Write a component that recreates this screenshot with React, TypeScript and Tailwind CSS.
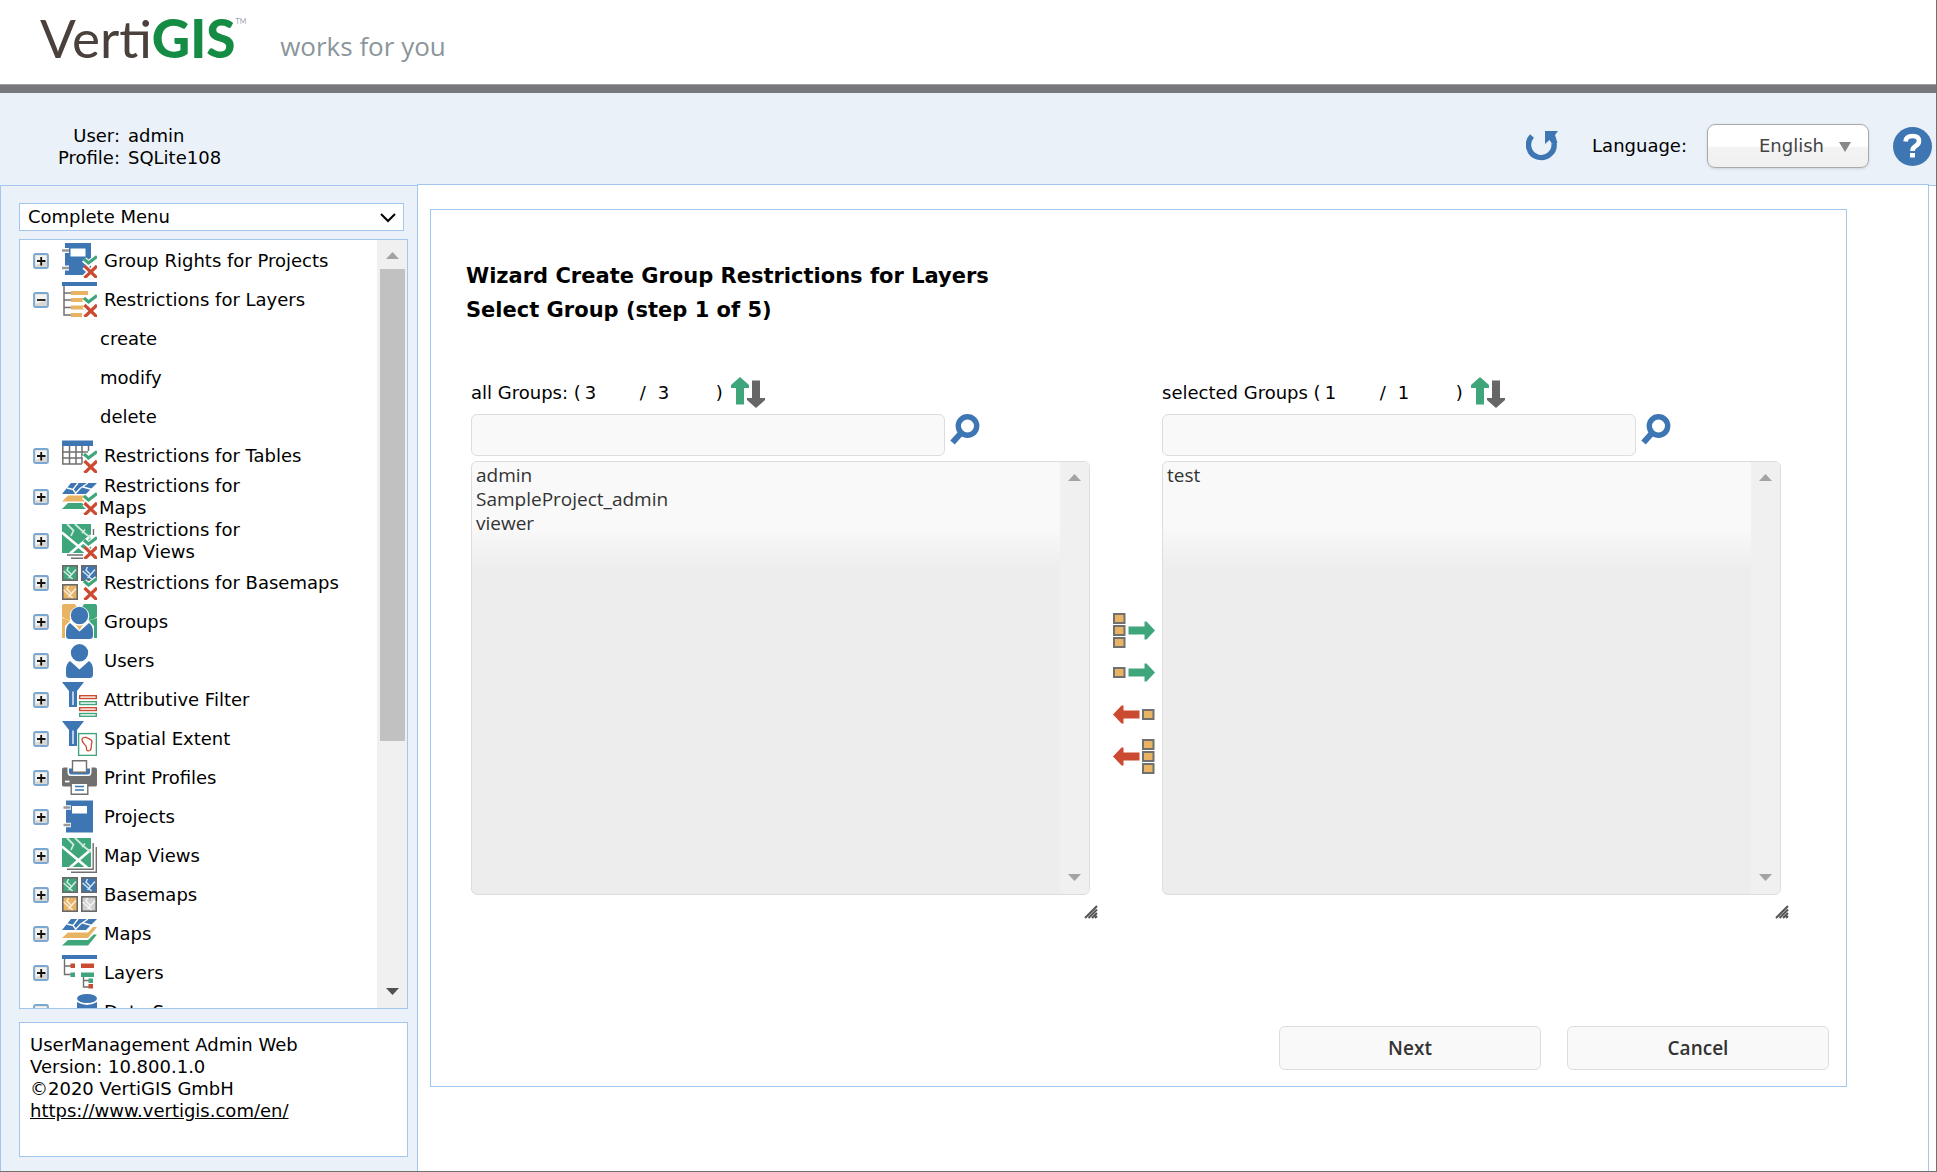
import type { ReactNode } from "react";

const BLUE = "#3d76b3";
const GREEN = "#3fa67c";
const RED = "#cb4b32";
const ORANGE = "#e8b363";
const GRAY = "#707070";

/* ---------- tree icons, all drawn on a 35 x 35 grid ---------- */

const Icon = ({ children }: { children: ReactNode }) => (
  <svg width="35" height="35" viewBox="0 0 35 35" className="shrink-0" aria-hidden="true">
    {children}
  </svg>
);

// green tick and red cross in the lower right corner
const Marks = () => (
  <g fill="none">
    <path d="M22 16.5l4.5 4L35 13.5M22.5 23.5l12 11M34.5 23.5l-12 11" stroke="#fff" strokeWidth="6" />
    <path d="M22 16l4.5 4 8.5-6.5" stroke={GREEN} strokeWidth="3.2" />
    <path d="M22.5 23l12.5 12M35 23L22.5 35" stroke={RED} strokeWidth="3.2" />
  </g>
);

const GroupRightsIcon = () => (
  <Icon>
    <path fill={BLUE} d="M3 0h26v32H3z" />
    <path fill="#fff" d="M8.5 5.5h15v8h-15z" />
    <path d="M0 7.5h7M0 25h7" stroke="#fff" strokeWidth="5" />
    <path d="M0 7.5h7M0 25h7" stroke="#9a9a9a" strokeWidth="2.5" />
    <Marks />
  </Icon>
);

const RestrictLayersIcon = () => (
  <Icon>
    <path d="M2 4v29h7M2 11h7M2 18h7M2 25.5h7" fill="none" stroke={GRAY} strokeWidth="1.5" />
    <path fill={BLUE} d="M0 0h35v4H0z" />
    <path fill={ORANGE} d="M9 9h17v4H9zM9 16h15v4H9zM9 23.5h13v4H9zM9 31h11v4H9z" />
    <Marks />
  </Icon>
);

const RestrictTablesIcon = () => (
  <Icon>
    <path
      d="M.8 8v18H20M7.5 8v18M14 8v18M20 8v18M26.5 8v5M.8 14H26M.8 20h19"
      fill="none"
      stroke={GRAY}
      strokeWidth="1.5"
    />
    <path fill={BLUE} d="M0 2.5h31V8H0z" />
    <Marks />
  </Icon>
);

const BlueSheet = () => (
  <>
    <path fill={BLUE} d="M9 3h26L24 14H0z" />
    <path
      d="M5 8l6 1.5L16 3M13 14l5-5.500 8-5.500M11 9.500l3 4M21 7l9 2.500"
      fill="none"
      stroke="#fff"
      strokeWidth="1.3"
    />
  </>
);

const RestrictMapsIcon = () => (
  <Icon>
    <BlueSheet />
    <path fill={ORANGE} d="M6 15.5h19l-1 6H0z" />
    <path fill={GREEN} d="M6 23h14l6 6H0z" />
    <Marks />
  </Icon>
);

const MapsIcon = () => (
  <Icon>
    <BlueSheet />
    <path fill={ORANGE} d="M6 16.5h20L31 11h4L26 22H0z" />
    <path fill={GREEN} d="M6 24h20l5.5-5.5H35l-9 11H0z" />
  </Icon>
);

const MapSheet = () => (
  <>
    <path fill={GREEN} d="M0 0h29v29H0z" />
    <path d="M0 8.5l25 21M29 11.5l-21 18" fill="none" stroke="#fff" strokeWidth="2.6" />
    <path d="M5 0l6.5 6.5L9 12M13 0l10 9.5 6 4.5M20 9l3-3.5" fill="none" stroke="#cfe9de" strokeWidth="1.8" />
  </>
);

const RestrictMapViewsIcon = () => (
  <Icon>
    <MapSheet />
    <path d="M5 31h16M9 34.2h12M31.5 5v6" fill="none" stroke={GRAY} strokeWidth="1.4" />
    <Marks />
  </Icon>
);

const MapViewsIcon = () => (
  <Icon>
    <MapSheet />
    <path d="M31.2 5v26.2H5M34.3 9v25.3H9" fill="none" stroke={GRAY} strokeWidth="1.4" />
  </Icon>
);

const Tile = ({ x, y, fill }: { x: number; y: number; fill: string }) => (
  <g transform={`translate(${x} ${y})`}>
    <rect x=".8" y=".8" width="14.4" height="14.4" fill={fill} stroke="#696969" strokeWidth="1.6" />
    <path
      d="M1.6 6l9 8M14 4.5L6.500 13M6.5 2L5 5l4 4"
      fill="none"
      stroke="#fff"
      strokeOpacity=".8"
      strokeWidth="1.4"
    />
  </g>
);

const RestrictBasemapsIcon = () => (
  <Icon>
    <Tile x={0} y={0} fill={GREEN} />
    <Tile x={19} y={0} fill={BLUE} />
    <Tile x={0} y={19} fill={ORANGE} />
    <Marks />
  </Icon>
);

const BasemapsIcon = () => (
  <Icon>
    <Tile x={0} y={0} fill={GREEN} />
    <Tile x={19} y={0} fill={BLUE} />
    <Tile x={0} y={19} fill={ORANGE} />
    <Tile x={19} y={19} fill="#cfcfcf" />
  </Icon>
);

const GroupsIcon = () => (
  <Icon>
    <circle cx="7" cy="7" r="9" fill={ORANGE} />
    <circle cx="28" cy="7" r="9" fill={GREEN} />
    <path fill={ORANGE} d="M0 14l9 3v17H0z" />
    <path fill={GREEN} d="M35 14l-9 3v17h9z" />
    <path fill="#fff" d="M3 22l5-5h19l5 5v13H3z" />
    <path fill={ORANGE} d="M14 21h7l-3.5 5z" />
    <circle cx="17.5" cy="12" r="9.8" fill="#fff" />
    <circle cx="17.5" cy="11.5" r="8.7" fill={BLUE} />
    <path fill={BLUE} d="M8 19l9.5 8.5L27 19c3 2 4 5 4 9v3c0 3-1 4-4 4H8c-3 0-4-1-4-4v-3c0-4 1-7 4-9z" />
  </Icon>
);

const UsersIcon = () => (
  <Icon>
    <circle cx="17.5" cy="9.8" r="8.7" fill={BLUE} />
    <path fill={BLUE} d="M8 18l9.5 8.5L27 18c3 2 4 5 4 9v4c0 3-1 4-4 4H8c-3 0-4-1-4-4v-4c0-4 1-7 4-9z" />
  </Icon>
);

const Funnel = () => (
  <>
    <path fill={BLUE} d="M0 0h22l-7 9v16H7V9z" />
    <path d="M11 9.5V23" stroke="#dce7f2" strokeWidth="1.6" />
  </>
);

const AttributiveFilterIcon = () => (
  <Icon>
    <Funnel />
    <g fill="#fff" strokeWidth="1.4">
      <rect x="17.7" y="13.7" width="16.6" height="2.8" stroke={RED} />
      <rect x="17.7" y="19.7" width="16.6" height="2.8" stroke={GREEN} />
      <rect x="17.7" y="25.7" width="16.6" height="2.8" stroke={RED} />
      <rect x="17.7" y="31.5" width="16.6" height="2.8" stroke={GREEN} />
    </g>
  </Icon>
);

const SpatialExtentIcon = () => (
  <Icon>
    <Funnel />
    <rect x="16.6" y="12.6" width="17.8" height="21.8" fill="#fff" stroke={GREEN} strokeWidth="1.4" />
    <path
      d="M20 18c1-2 3-1.5 4.5-1.5 2 1.5 5.5 1 5.5 4.5-1.5 3 .5 6-2 8.5-3 1-4-.5-3.5-3-.5-3-5-4-4.5-8.5z"
      fill="none"
      stroke={RED}
      strokeWidth="1.3"
    />
  </Icon>
);

const PrintIcon = () => (
  <Icon>
    <path fill={GRAY} d="M2 7.5h31q2 0 2 2V25q0 1.500-2 1.500H2Q0 26.500 0 25V9.500q0-2 2-2z" />
    <path fill="#fff" d="M5.500 7h24v5q0 4-3 4h-18q-3 0-3-4z" />
    <path fill={BLUE} d="M7 8.500h21V12q0 2.500-2 2.500H9q-2 0-2-2.500z" />
    <path fill="#fff" stroke={GRAY} strokeWidth="1.4" d="M10.500.7h14v11.500h-14z" />
    <path d="M3 21.5h4.5" stroke="#fff" strokeWidth="1.8" />
    <path fill="#fff" stroke={GRAY} strokeWidth="1.4" d="M9.200 23.200h16.600v11.100H9.200z" />
    <path d="M13 26.5h9M13 30h9" stroke={BLUE} strokeWidth="1.5" />
  </Icon>
);

const ProjectsIcon = () => (
  <Icon>
    <path fill={BLUE} d="M4 1.5h27v32H4z" />
    <path fill="#fff" d="M10 7h15v7.5H10z" />
    <path d="M1.5 8.5H9M1.5 26H9" stroke="#fff" strokeWidth="4.5" />
    <path d="M1.5 8.5h7M1.5 26h7" stroke="#9a9a9a" strokeWidth="2.4" />
  </Icon>
);

const LayersIcon = () => (
  <Icon>
    <path
      d="M2.5 4v15.5H9M2.5 11H9M21.5 21v11H27M21.5 25.5H27"
      fill="none"
      stroke={GRAY}
      strokeWidth="1.4"
    />
    <path fill={BLUE} d="M0 0h35v4H0z" />
    <path fill={RED} d="M8.5 8.5H13V13H8.500zM19 8.5h13V13H19zM26.500 29h4.500v4.500h-4.500z" />
    <path fill={GREEN} d="M8.5 17.5H13V22H8.500zM19 17.5h13V22H19zM26.500 23.500h4.500V28h-4.500z" />
  </Icon>
);

const DataIcon = () => (
  <Icon>
    <ellipse cx="25" cy="4.5" rx="10" ry="4.5" fill={BLUE} />
    <path fill={BLUE} d="M15 8q10 6 20 0v25H15z" />
  </Icon>
);

/* ---------- small controls ---------- */

const ExpandBox = ({ open }: { open?: boolean }) => (
  <svg width="16" height="16" viewBox="0 0 16 16" className="shrink-0" aria-hidden="true">
    <rect x="1" y="1" width="14" height="14" rx="1.5" fill="#dad8d0" stroke="#7ba7d3" strokeWidth="1.8" />
    <path d="M2.500 2.500h11v6L2.500 12z" fill="#f4f3ef" />
    <path d={open ? "M4 8h8.5" : "M4 8h8.5M8.2 4v8.5"} stroke="#111" strokeWidth="1.8" />
  </svg>
);

const ScrollArrow = ({ down, dark }: { down?: boolean; dark?: boolean }) => (
  <svg width="13" height="7" viewBox="0 0 13 7" aria-hidden="true">
    <path d={down ? "M0 0h13L6.5 7z" : "M0 7h13L6.5 0z"} fill={dark ? "#505050" : "#a3a3a3"} />
  </svg>
);

const SortIcon = () => (
  <svg width="34" height="31" viewBox="0 0 34 31" aria-hidden="true">
    <path fill={GREEN} d="M9 0l9 8v3h-5v16.5H5V11H0V8z" />
    <path fill="#666" d="M21 3.5h8V21h5v2l-9 8-9-8v-2h5z" />
  </svg>
);

const SearchIcon = () => (
  <svg width="30" height="31" viewBox="0 0 30 31" aria-hidden="true">
    <path d="M11.5 18.5l-9 10" stroke={BLUE} strokeWidth="6" />
    <circle cx="17.5" cy="12" r="9.2" fill="none" stroke={BLUE} strokeWidth="5.4" />
  </svg>
);

const ResizeGrip = () => (
  <svg width="14" height="14" viewBox="0 0 14 14" className="mt-2.5 -mr-2 ml-auto" aria-hidden="true">
    <path d="M1 13L13 1M4.5 13L13 4.5M8 13l5-5M11 13l2-2" stroke="#555" strokeWidth="2" />
  </svg>
);

const Boxes = ({ x, rows }: { x: number; rows: number[] }) => (
  <>
    {rows.map((y) => (
      <rect key={y} x={x + 1} y={y - 4} width="10.5" height="9" fill={ORANGE} stroke={GRAY} strokeWidth="2" />
    ))}
  </>
);

const transfers = [
  { label: "Add all", add: true, rows: [6, 18, 30] },
  { label: "Add", add: true, rows: [18] },
  { label: "Remove", add: false, rows: [18] },
  { label: "Remove all", add: false, rows: [6, 18, 30] },
];

/* ---------- sidebar ---------- */

type TreeItem = { lines: string[]; icon?: () => ReactNode; open?: boolean };

const tree: TreeItem[] = [
  { lines: ["Group Rights for Projects"], icon: GroupRightsIcon },
  { lines: ["Restrictions for Layers"], icon: RestrictLayersIcon, open: true },
  { lines: ["create"] },
  { lines: ["modify"] },
  { lines: ["delete"] },
  { lines: ["Restrictions for Tables"], icon: RestrictTablesIcon },
  { lines: ["Restrictions for", "Maps"], icon: RestrictMapsIcon },
  { lines: ["Restrictions for", "Map Views"], icon: RestrictMapViewsIcon },
  { lines: ["Restrictions for Basemaps"], icon: RestrictBasemapsIcon },
  { lines: ["Groups"], icon: GroupsIcon },
  { lines: ["Users"], icon: UsersIcon },
  { lines: ["Attributive Filter"], icon: AttributiveFilterIcon },
  { lines: ["Spatial Extent"], icon: SpatialExtentIcon },
  { lines: ["Print Profiles"], icon: PrintIcon },
  { lines: ["Projects"], icon: ProjectsIcon },
  { lines: ["Map Views"], icon: MapViewsIcon },
  { lines: ["Basemaps"], icon: BasemapsIcon },
  { lines: ["Maps"], icon: MapsIcon },
  { lines: ["Layers"], icon: LayersIcon },
  { lines: ["Data Sources"], icon: DataIcon },
];

const TreeRow = ({ item }: { item: TreeItem }) => {
  if (!item.icon) {
    return (
      <li>
        <button className="block h-[39px] pl-20 text-left">{item.lines[0]}</button>
      </li>
    );
  }
  return (
    <li>
      <button className="flex min-h-[39px] w-full items-center pl-[13px] text-left">
        <ExpandBox open={item.open} />
        <span className="ml-[13px] shrink-0">
          <item.icon />
        </span>
        <span className="ml-0.5 indent-[5px]">
          {item.lines[0]}
          {item.lines[1] && (
            <>
              <br />
              <span className="inline-block indent-0">{item.lines[1]}</span>
            </>
          )}
        </span>
      </button>
    </li>
  );
};

const Sidebar = () => (
  <aside className="mt-px flex w-[417px] shrink-0 flex-col border-t border-l border-[#a3c6ee] pt-[17px] pr-[9px] pb-[14px] pl-[18px]">
    <div className="relative mr-1">
      <select
        aria-label="Menu"
        className="block h-7 w-full appearance-none border border-[#a3c6ee] bg-white pl-2 leading-[22px]"
      >
        <option>Complete Menu</option>
      </select>
      <svg
        width="16"
        height="10"
        viewBox="0 0 16 10"
        className="pointer-events-none absolute top-[10px] right-2"
        aria-hidden="true"
      >
        <path d="M1 1l7 7 7-7" fill="none" stroke="#000" strokeWidth="2" />
      </svg>
    </div>

    <nav className="mt-2 flex min-h-0 flex-1 border border-[#a3c6ee] bg-white">
      <ul className="min-w-0 flex-1 overflow-hidden pt-px">
        {tree.map((item) => (
          <TreeRow key={item.lines.join(" ")} item={item} />
        ))}
      </ul>
      <div className="flex w-[30px] flex-col items-center justify-between bg-[#f0f0f0] pt-3 pb-[13px]" aria-hidden="true">
        <ScrollArrow />
        <div className="mt-[10px] mb-auto h-[472px] w-[25px] bg-[#c1c1c1]" />
        <ScrollArrow down dark />
      </div>
    </nav>

    <footer className="mt-[13px] min-h-[135px] border border-[#a3c6ee] bg-white px-[10px] pt-[11px]">
      <p>UserManagement Admin Web</p>
      <p>Version: 10.800.1.0</p>
      <p>©2020 VertiGIS GmbH</p>
      <a href="https://www.vertigis.com/en/" className="underline">
        https://www.vertigis.com/en/
      </a>
    </footer>
  </aside>
);

/* ---------- wizard ---------- */

type GroupListProps = { id: string; title: string; count: number; items: string[] };

const GroupList = ({ id, title, count, items }: GroupListProps) => (
  <section className="min-w-0 flex-1">
    <div className="flex h-[31px] items-center">
      <label htmlFor={id}>{title}&nbsp;(</label>
      <span className="w-[59px] pl-1">{count}</span>
      <span>/</span>
      <span className="w-[70px] pl-3">{count}</span>
      <span>)</span>
      <button className="ml-2" aria-label="Sort">
        <SortIcon />
      </button>
    </div>

    <div className="mt-1.5 flex items-start pr-[110px]">
      <input
        type="text"
        aria-label="Filter"
        className="h-[42px] min-w-0 flex-1 rounded-md border border-[#ddd] bg-[#f9f9f9] px-3"
      />
      <button className="ml-[5px]" aria-label="Search">
        <SearchIcon />
      </button>
    </div>

    <div className="relative mt-[5px]">
      <select
        id={id}
        multiple
        className="block h-[434px] w-full overflow-hidden rounded-md border border-[#ddd] bg-[linear-gradient(#f9f9f9_15%,#ededed_25%)] pl-0.5 font-['Open_Sans',sans-serif] text-[19px] text-[#333]"
      >
        {items.map((item) => (
          <option key={item} className="h-6 px-0.5 py-0 leading-6">
            {item}
          </option>
        ))}
      </select>
      {/* disabled scrollbar track */}
      <div
        className="pointer-events-none absolute inset-y-px right-px flex w-[29px] flex-col items-center justify-between rounded-r-[5px] bg-[#f0f0f0] pt-3 pb-[13px]"
        aria-hidden="true"
      >
        <ScrollArrow />
        <ScrollArrow down />
      </div>
    </div>
    <ResizeGrip />
  </section>
);

const Wizard = () => (
  <div className="mt-6 mr-[81px] ml-3 border border-[#a3c6ee] pt-[49px] pb-4">
    <h1 className="pl-[35px] text-[21px] leading-[34px] font-bold">
      Wizard Create Group Restrictions for Layers
      <br />
      Select Group (step 1 of 5)
    </h1>

    <div className="mt-[50px] flex pr-[65px] pl-10">
      <GroupList id="all-groups" title="all Groups:" count={3} items={["admin", "SampleProject_admin", "viewer"]} />
      <div className="w-[72px] shrink-0 pt-[232px] pl-[23px]">
        {transfers.map((t) => (
          <button key={t.label} aria-label={t.label} className="flex h-[42px] items-center">
            <svg width="42" height="37" viewBox="0 0 42 37" aria-hidden="true">
              <Boxes x={t.add ? 0 : 29} rows={t.rows} />
              {t.add ? (
                <path fill={GREEN} d="M15.5 14.5h16v-5h2l8.5 9-8.5 9h-2v-5h-16z" />
              ) : (
                <path fill={RED} d="M26.5 14.5h-16v-5h-2l-8.5 9 8.5 9h2v-5h16z" />
              )}
            </svg>
          </button>
        ))}
      </div>
      <GroupList id="selected-groups" title="selected Groups" count={1} items={["test"]} />
    </div>

    <div className="mt-[107px] flex justify-end gap-[26px] pr-[17px] font-['Open_Sans',sans-serif] text-[19px] font-semibold text-[#333]">
      <button className="h-11 w-[262px] rounded-md border border-[#ddd] bg-[#f9f9f9]">Next</button>
      <button className="h-11 w-[262px] rounded-md border border-[#ddd] bg-[#f9f9f9]">Cancel</button>
    </div>
  </div>
);

/* ---------- page ---------- */

const Brand = () => (
  <div className="flex h-[84px] shrink-0 items-start bg-white pl-10">
    <div className="flex pt-2 font-['Lato',sans-serif] text-[53px] leading-[60px] text-[#4a403c]">
      <span>Verti</span>
      <span className="font-black text-[#158c43]">GIS</span>
      <span className="pt-2 text-[7px] leading-[10px] text-gray-400">TM</span>
    </div>
    <span className="ml-[34px] pt-[31px] font-['Open_Sans',sans-serif] text-[26px] leading-[30px] text-[#8b969b]">
      works for you
    </span>
  </div>
);

const TopBar = () => (
  <div className="flex h-[91px] shrink-0 items-start bg-[#eaf1f9] pr-1">
    <dl className="grid grid-cols-[120px_auto] gap-x-2 pt-8">
      <dt className="text-right">User:</dt>
      <dd>admin</dd>
      <dt className="text-right">Profile:</dt>
      <dd>SQLite108</dd>
    </dl>
    <div className="mt-[31px] ml-auto flex h-11 items-center">
      <button aria-label="Reload" className="mr-[34px]">
        <svg width="32" height="31" viewBox="0 0 32 31" aria-hidden="true">
          <path d="M6 5a12.800 12.800 0 1 0 22 7" fill="none" stroke={BLUE} strokeWidth="5.4" />
          <path d="M19 0h13l-3 4 2.500 8h-6L23.500 9 19 13z" fill={BLUE} />
        </svg>
      </button>
      <label htmlFor="language" className="mr-5">
        Language:
      </label>
      <div className="relative mr-6">
        <select
          id="language"
          className="block h-11 w-[162px] appearance-none rounded-lg border border-[#aaa] bg-[linear-gradient(#fff_50%,#f3f3f3_54%,#f0f0f0)] pl-[51px] text-[#444] shadow-sm"
        >
          <option>English</option>
        </select>
        <svg
          width="12"
          height="10"
          viewBox="0 0 12 10"
          className="pointer-events-none absolute top-[18px] right-[18px]"
          aria-hidden="true"
        >
          <path d="M0 0h12L6 10z" fill="#888" />
        </svg>
      </div>
      <button aria-label="Help">
        <svg width="39" height="39" viewBox="0 0 39 39" aria-hidden="true">
          <circle cx="19.5" cy="19.5" r="19.5" fill={BLUE} />
          <path
            d="M12.5 14.5q.5-5.500 7-5.500t6.500 5q0 3-3.300 5t-3.200 5"
            fill="none"
            stroke="#fff"
            strokeWidth="4.6"
          />
          <path d="M17 26h5v4.5h-5z" fill="#fff" />
        </svg>
      </button>
    </div>
  </div>
);

export default function App() {
  return (
    <div className="flex h-screen flex-col overflow-hidden border-r border-b border-[#707070] bg-white font-['DejaVu_Sans',Verdana,sans-serif] text-lg leading-[22px] text-black">
      <Brand />
      <div className="h-[9px] shrink-0 border-t border-[#a0a0a0] bg-[#77787b]" />
      <TopBar />
      <div className="flex min-h-0 flex-1 bg-[#eaf1f9]">
        <Sidebar />
        <main className="min-w-0 flex-1 border-t border-r border-l border-[#a3c6ee] bg-white">
          <Wizard />
        </main>
        <div className="mt-px w-[7px] shrink-0 border-t border-[#a3c6ee] bg-white" />
      </div>
    </div>
  );
}
